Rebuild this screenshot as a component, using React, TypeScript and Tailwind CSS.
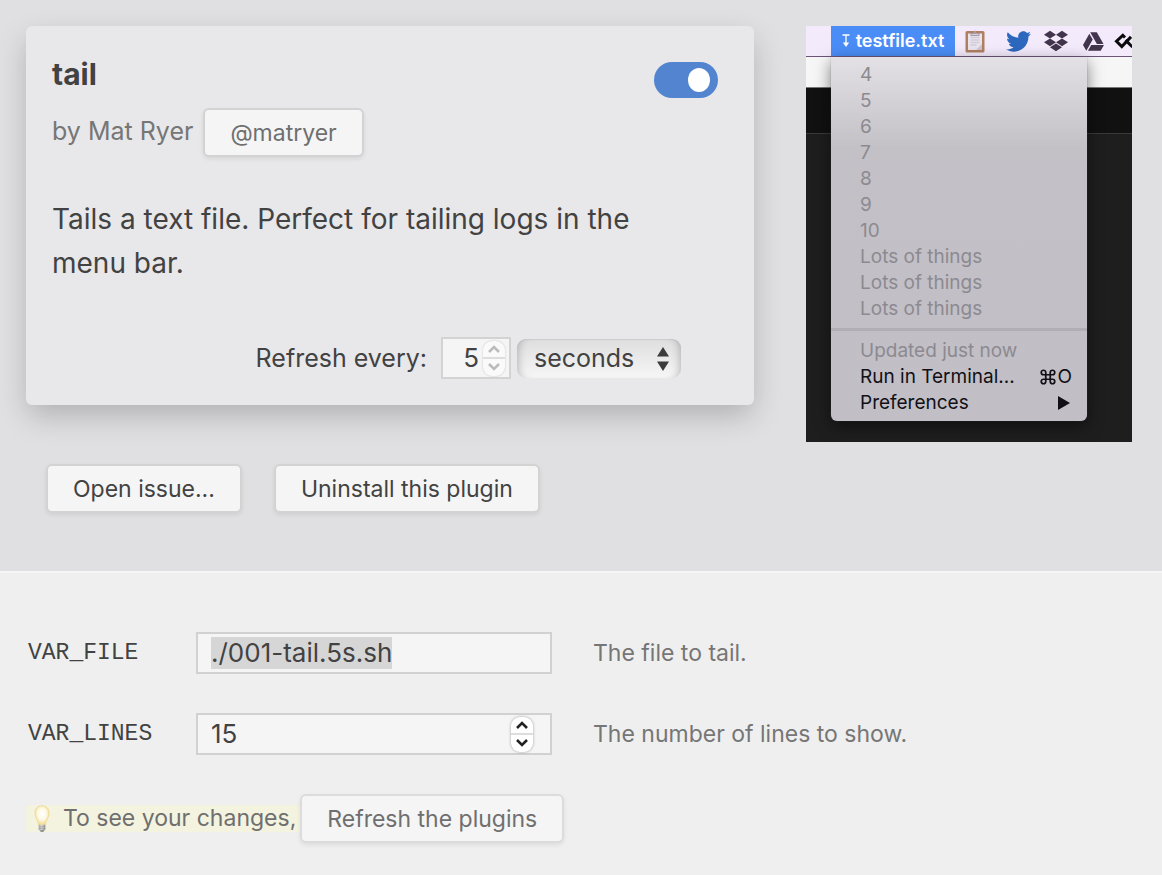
import { useEffect, useRef, useState } from "react";
import type { ReactNode } from "react";
import { FaDropbox, FaGoogleDrive, FaTwitter } from "react-icons/fa";

const buttonBase =
  "h-[49px] rounded-[6px] border-2 px-[25px] text-[23px] leading-[30px] whitespace-nowrap bg-[#f5f5f5] shadow-[0_2px_4px_rgba(0,0,0,0.08)]";

function Button({ children, tone = "text-[#424242] border-[#d3d3d4]" }: { children: ReactNode; tone?: string }) {
  return (
    <button type="button" className={`${buttonBase} ${tone}`}>
      {children}
    </button>
  );
}

function Toggle() {
  const [on, setOn] = useState(true);
  return (
    <button
      type="button"
      role="switch"
      aria-checked={on}
      aria-label="Plugin enabled"
      onClick={() => setOn(!on)}
      className={`flex h-9 w-16 shrink-0 items-center rounded-full px-2 ${on ? "justify-end bg-[#5284d0]" : "justify-start bg-[#b5b5b8]"}`}
    >
      <span className="h-6 w-[22px] rounded-[50%] bg-white" />
    </button>
  );
}

function Stepper({ muted, onStep }: { muted?: boolean; onStep: (by: number) => void }) {
  const stroke = muted ? "#bcbcbc" : "#222222";
  return (
    <span
      className={`flex h-[35px] w-[22px] shrink-0 flex-col overflow-hidden rounded-[9px] ${muted ? "bg-[#fafafa] shadow-[0_0_2px_rgba(0,0,0,0.22)]" : "bg-white shadow-[0_0_3px_rgba(0,0,0,0.35)]"}`}
    >
      <button type="button" aria-label="Increase" onClick={() => onStep(1)} className="flex flex-1 items-center justify-center border-b border-[#dddddd]">
        <svg width="12" height="8" viewBox="0 0 12 8" fill="none" stroke={stroke} strokeWidth="2.6">
          <path d="M1 7 6 2l5 5" />
        </svg>
      </button>
      <button type="button" aria-label="Decrease" onClick={() => onStep(-1)} className="flex flex-1 items-center justify-center border-t border-[#dddddd]">
        <svg width="12" height="8" viewBox="0 0 12 8" fill="none" stroke={stroke} strokeWidth="2.6">
          <path d="m1 1 5 5 5-5" />
        </svg>
      </button>
    </span>
  );
}

const numberInput =
  "min-w-0 flex-1 bg-transparent text-[26px] leading-8 outline-none [appearance:textfield] [&::-webkit-inner-spin-button]:appearance-none [&::-webkit-outer-spin-button]:appearance-none";

function RefreshRow() {
  const [every, setEvery] = useState(5);
  return (
    <div className="mt-[52px] flex h-[42px] items-center justify-end pr-[47px]">
      <label htmlFor="every" className="mr-[14px] text-[25px] leading-8">
        Refresh every:
      </label>
      <span className="mr-1.5 flex h-[42px] w-[70px] items-center border-2 border-[#d3d3d4] bg-[#f5f5f5] pr-1">
        <input
          id="every"
          type="number"
          value={every}
          onChange={(e) => setEvery(Number(e.target.value))}
          className={`${numberInput} pr-1 text-right`}
        />
        <Stepper muted onStep={(by) => setEvery(every + by)} />
      </span>
      <span className="relative">
        <select
          aria-label="Refresh unit"
          defaultValue="seconds"
          className="block h-[39px] w-[164px] appearance-none rounded-[9px] bg-linear-to-b from-[#dedede] to-[#f6f6f6] pl-[17px] text-[25px] leading-8 shadow-[inset_8px_0_8px_-7px_rgba(0,0,0,0.25),inset_-8px_0_8px_-7px_rgba(0,0,0,0.25),inset_0_1px_0_rgba(0,0,0,0.05)] outline-none"
        >
          <option>seconds</option>
          <option>minutes</option>
          <option>hours</option>
          <option>days</option>
        </select>
        <svg className="pointer-events-none absolute top-[8px] right-3 h-6 w-3" viewBox="0 0 12 24" fill="#3c3c3c" aria-hidden="true">
          <path d="M6 0l6 9.5H0zM6 24l6-9.5H0z" />
        </svg>
      </span>
    </div>
  );
}

function PluginCard() {
  return (
    <article className="rounded-[6px] bg-[#e8e8ea] p-[26px] shadow-[0_12px_30px_-2px_rgba(0,0,0,0.22)]">
      <header className="flex items-start justify-between pr-[10px]">
        <h1 className="text-[30px] leading-[44px] font-bold">tail</h1>
        <div className="pt-[10px]">
          <Toggle />
        </div>
      </header>
      <div className="mt-[10px] flex items-center gap-[10px] text-[#767676]">
        <p className="pb-1 text-[25px] leading-8">by Mat Ryer</p>
        <Button tone="text-[#6f6f6f] border-[#d3d3d4]">@matryer</Button>
      </div>
      <p className="mt-10 max-w-[620px] text-[28px] leading-[44px]">
        Tails a text file. Perfect for tailing logs in the menu bar.
      </p>
      <RefreshRow />
    </article>
  );
}

function ClipboardIcon() {
  return (
    <svg width="20" height="24" viewBox="0 0 20 24" aria-hidden="true">
      <rect x="0.5" y="2" width="19" height="21.5" rx="1.6" fill="#b07f62" />
      <rect x="3" y="4.5" width="14" height="16.5" fill="#e9e3ec" />
      <path d="M17 15v6h-6z" fill="#cdc4cf" />
      <path d="M5.500 8.500h9M5.500 11h9M5.500 13.500h9M5.500 16h6" stroke="#d3cddb" strokeWidth="1.600" />
      <path d="M5.500 4h3a1.600 2.600 0 0 1 3 0h3v3h-9z" fill="#a79ba6" />
      <path d="M6.500 5.500h7M10 .5v2" stroke="#d8d1da" strokeWidth="1" />
    </svg>
  );
}

function LoopIcon() {
  return (
    <svg width="20" height="18" viewBox="0 0 20 18" fill="none" stroke="#0b0a0c" strokeWidth="3" aria-hidden="true">
      <path d="M11 5.500 8.800 3.300 2.500 9.200l5.300 5.300L17 4.800" />
      <path d="M11.500 8.200l7 6.800" />
    </svg>
  );
}

const outputLines = ["4", "5", "6", "7", "8", "9", "10", "Lots of things", "Lots of things", "Lots of things"];

function MenuPreview() {
  return (
    <figure className="relative h-[416px] w-[326px] shrink-0 overflow-hidden bg-[#1e1e1e] text-[19px] leading-[26px]">
      <div className="flex h-[31px] items-center border-b border-[#6b5478] bg-[#f3eafb] pl-[25px]">
        <span className="flex h-[30px] w-[124px] shrink-0 items-center justify-center gap-1.5 bg-[#4a8df6] font-semibold text-white">
          <svg width="8" height="14" viewBox="0 0 8 14" fill="none" stroke="white" strokeWidth="1.300" aria-hidden="true">
            <path d="M.5 1h7M4 1v8" />
            <path d="M.8 8.500h6.400L4 13z" fill="white" stroke="none" />
          </svg>
          <span className="text-[18px]">testfile.txt</span>
        </span>
        <span className="ml-[10px] flex shrink-0 items-center text-[#42344c]">
          <ClipboardIcon />
          <FaTwitter className="ml-[21px] text-[#2c68bd]" size={25} />
          <FaDropbox className="ml-[13px]" size={24} />
          <FaGoogleDrive className="ml-[15px]" size={21} />
          <span className="ml-[10px]">
            <LoopIcon />
          </span>
        </span>
      </div>
      <div className="h-[30px] bg-[#f6f6f6]" />
      <div className="h-[47px] border-t border-b border-t-[#777777] border-b-[#3a3a3a] bg-[#111111]" />

      <div className="absolute top-[31px] left-[25px] w-[256px] rounded-b-[6px] bg-linear-to-b from-[#e3e0e6] via-[#c3c0c6] via-25% to-[#c1bec6] pt-[5px] pb-[5px] text-[#8c8a90] shadow-[0_5px_16px_rgba(0,0,0,0.5),0_0_1px_rgba(120,118,124,0.9)]">
        <ul>
          {outputLines.map((line, i) => (
            <li key={i} className="px-[29px]">
              {line}
            </li>
          ))}
        </ul>
        <hr className="mt-[6px] mb-[7px] border-t-3 border-[#b1aeb5]" />
        <ul>
          <li className="px-[29px]">Updated just now</li>
          <li className="flex justify-between pr-[15px] pl-[29px] text-[#111015]">
            <span>Run in Terminal...</span>
            <span className="flex items-center">
              <svg width="18" height="18" viewBox="0 0 24 24" fill="none" stroke="currentColor" strokeWidth="2.300" aria-hidden="true">
                <path d="M15 6v12a3 3 0 1 0 3-3H6a3 3 0 1 0 3 3V6a3 3 0 1 0-3 3h12a3 3 0 1 0-3-3" />
              </svg>
              O
            </span>
          </li>
          <li className="flex items-center justify-between pr-[17px] pl-[29px] text-[#111015]">
            <span>Preferences</span>
            <svg width="12" height="14" viewBox="0 0 12 14" fill="currentColor" aria-hidden="true">
              <path d="M0 0l12 7-12 7z" />
            </svg>
          </li>
        </ul>
      </div>
    </figure>
  );
}

function BulbIcon() {
  return (
    <svg width="16" height="27" viewBox="0 0 16 27" aria-hidden="true">
      <defs>
        <radialGradient id="glass" cx="50%" cy="42%" r="55%">
          <stop offset="0" stopColor="#ffffff" />
          <stop offset="0.55" stopColor="#fdf9e6" />
          <stop offset="1" stopColor="#f2dd93" />
        </radialGradient>
        <linearGradient id="cap">
          <stop offset="0" stopColor="#a9a9a9" />
          <stop offset="0.45" stopColor="#dedede" />
          <stop offset="1" stopColor="#8e8e8e" />
        </linearGradient>
      </defs>
      <path d="M8 .8C3.800.800.900 3.900.900 8c0 4.500 3.200 6.500 3.700 12h6.800c.5-5.500 3.700-7.500 3.700-12C15.100 3.900 12.200.8 8 .8z" fill="url(#glass)" stroke="#edd993" strokeWidth="0.900" />
      <path d="M4.700 19.800h6.600v4.400L9.800 26.500H6.200l-1.500-2.300z" fill="url(#cap)" />
      <path d="M4.700 21.800h6.600M4.700 23.700h6.600" stroke="#989898" strokeWidth="0.700" />
      <path d="M6.500 25.200h3v1.500h-3z" fill="#777777" />
    </svg>
  );
}

const rowClass = "grid grid-cols-[144px_minmax(0,356px)_minmax(0,1fr)] items-center";
const labelClass = "pl-0.5 font-['Liberation_Mono',monospace] text-[23px] leading-8";
const fieldClass = "ml-[26px] flex h-[42px] w-[356px] items-center border-2 border-[#d1d1d1] bg-[#f5f5f5] px-[13px]";
const helpClass = "ml-[67px] text-[23px] leading-8 text-[#767676]";

function Variables() {
  const fileRef = useRef<HTMLInputElement>(null);
  const [lines, setLines] = useState(15);

  useEffect(() => {
    fileRef.current?.focus();
    fileRef.current?.select();
  }, []);

  return (
    <form className="flex flex-col gap-[39px]" onSubmit={(e) => e.preventDefault()}>
      <div className={rowClass}>
        <label htmlFor="file" className={labelClass}>
          VAR_FILE
        </label>
        <div className={fieldClass}>
          <input
            id="file"
            ref={fileRef}
            type="text"
            defaultValue="./001-tail.5s.sh"
            className="w-full bg-transparent text-[26px] leading-8 outline-none selection:bg-[#d6d6d6] selection:text-[#424242]"
          />
        </div>
        <p className={helpClass}>The file to tail.</p>
      </div>
      <div className={rowClass}>
        <label htmlFor="lines" className={labelClass}>
          VAR_LINES
        </label>
        <div className={fieldClass}>
          <input
            id="lines"
            type="number"
            value={lines}
            onChange={(e) => setLines(Number(e.target.value))}
            className={numberInput}
          />
          <span className="flex pr-1">
            <Stepper onStep={(by) => setLines(lines + by)} />
          </span>
        </div>
        <p className={helpClass}>The number of lines to show.</p>
      </div>
      <div className="flex items-center text-[#6f6f6f]">
        <p className="flex h-[27px] items-center bg-[#f4f3e0] pr-1 pl-2 text-[23px] leading-[27px] whitespace-nowrap">
          <BulbIcon />
          <span className="ml-[13px]">To see your changes,</span>
        </p>
        <Button tone="text-[#6f6f6f] border-[#dcdcdc]">Refresh the plugins</Button>
      </div>
    </form>
  );
}

export default function App() {
  return (
    <main className="min-h-screen bg-[#efefef] font-['Inter','Liberation_Sans',sans-serif] text-[#424242]">
      <section className="flex items-start gap-[52px] border-b-2 border-[#f6f6f7] bg-[#e0e0e2] pt-[26px] pr-[30px] pb-[58px] pl-[26px]">
        <div className="min-w-0 flex-1">
          <PluginCard />
          <div className="mt-[59px] flex gap-8 pl-5">
            <Button>Open issue...</Button>
            <Button>Uninstall this plugin</Button>
          </div>
        </div>
        <MenuPreview />
      </section>
      <section className="px-[26px] pt-[59px] pb-8">
        <Variables />
      </section>
    </main>
  );
}
